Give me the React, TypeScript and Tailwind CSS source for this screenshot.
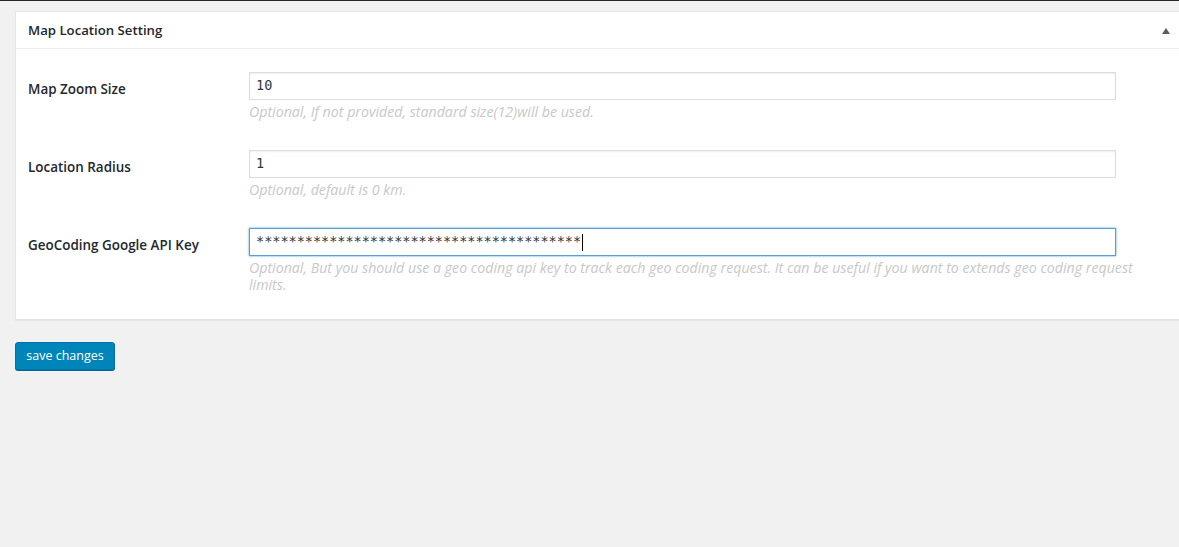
import React from "react";

const font = { fontFamily: '"Open Sans", "Noto Sans", sans-serif' };

function Row({
  label,
  value,
  desc,
  focused,
}: {
  label: string;
  value: string;
  desc: React.ReactNode;
  focused?: boolean;
}) {
  return (
    <div className="flex">
      <div className="w-[221px] shrink-0 pt-[7px] text-[13.45px] leading-[20px] font-semibold text-[#23282d]">
        {label}
      </div>
      <div className="flex-1">
        <div
          className={
            "w-[867px] h-[28px] flex items-center pl-[6px] bg-white border " +
            (focused
              ? "border-[#5b9dd9] shadow-[0_0_2px_rgba(30,140,190,0.8)]"
              : "border-[#dddddd] shadow-[inset_0_1px_2px_rgba(0,0,0,0.07)]")
          }
        >
          <span
            className="text-[13.5px] text-[#32373c] leading-none"
            style={{ fontFamily: '"DejaVu Sans Mono", "Liberation Mono", monospace' }}
          >
            {value}
          </span>
          {focused && <span className="ml-[1px] w-[1px] h-[17px] bg-black" />}
        </div>
        <div className="mt-[3px] text-[14.2px] leading-[17px] italic text-[#c8c8c8]">{desc}</div>
      </div>
    </div>
  );
}

export default function App() {
  return (
    <div className="w-[1179px] h-[547px] bg-[#f1f1f1] overflow-hidden relative" style={font}>
      <div className="h-[1px] bg-[#23282d]" />
      <div className="pt-[10px] pl-[15px]">
        <div className="w-[1180px] bg-white border border-[#e5e5e5] shadow-[0_1px_1px_rgba(0,0,0,0.04)]">
          <div className="h-[37px] flex items-center justify-between pl-[12px] pr-[24px] pt-[2px] border-b border-[#eeeeee]">
            <span className="text-[13.2px] font-semibold text-[#23282d]">Map Location Setting</span>
            <svg width="8" height="6" viewBox="0 0 8 6">
              <path d="M4 0 L8 6 L0 6 Z" fill="#555d66" />
            </svg>
          </div>
          <div className="pl-[12px] pt-[23px] pb-[26px] flex flex-col gap-[30px]">
            <Row
              label="Map Zoom Size"
              value="10"
              desc="Optional, If not provided, standard size(12)will be used."
            />
            <Row label="Location Radius" value="1" desc="Optional, default is 0 km." />
            <Row
              label="GeoCoding Google API Key"
              value={"*".repeat(40)}
              focused
              desc={
                <>
                  <span className="whitespace-nowrap">
                    Optional, But you should use a geo coding api key to track each geo coding request. It can be
                    useful if you want to extends geo coding request
                  </span>
                  <br />
                  limits.
                </>
              }
            />
          </div>
        </div>
        <button className="mt-[22px] w-[100px] h-[28px] pt-[1px] rounded-[3px] bg-[#0085ba] border border-[#0073aa] shadow-[0_1px_0_#006799] text-white text-[12.5px] leading-none">
          save changes
        </button>
      </div>
    </div>
  );
}
